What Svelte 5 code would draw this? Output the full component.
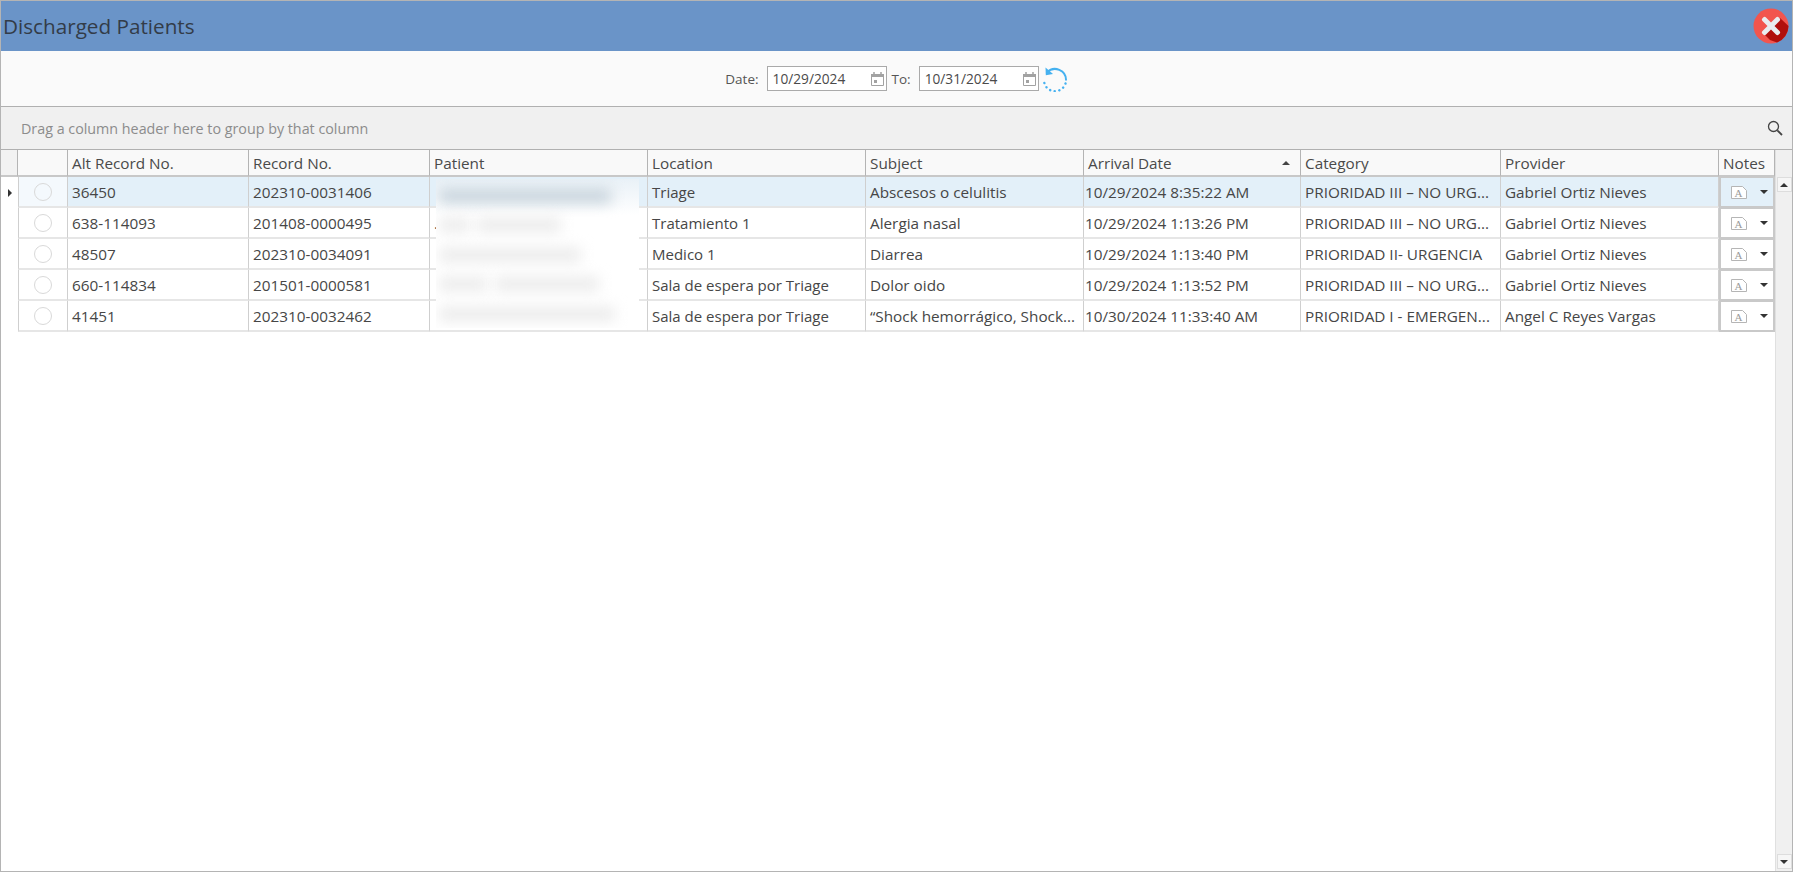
<script>
    const columns = [
        { label: "Alt Record No." },
        { label: "Record No." },
        { label: "Patient" },
        { label: "Location" },
        { label: "Subject" },
        { label: "Arrival Date", sorted: true },
        { label: "Category" },
        { label: "Provider" },
        { label: "Notes" },
    ];

    const rows = [
        {
            alt: "36450",
            record: "202310-0031406",
            location: "Triage",
            subject: "Abscesos o celulitis",
            arrival: "10/29/2024 8:35:22 AM",
            category: "PRIORIDAD III – NO URG...",
            provider: "Gabriel Ortiz Nieves",
        },
        {
            alt: "638-114093",
            record: "201408-0000495",
            patient: ".",
            location: "Tratamiento 1",
            subject: "Alergia nasal",
            arrival: "10/29/2024 1:13:26 PM",
            category: "PRIORIDAD III – NO URG...",
            provider: "Gabriel Ortiz Nieves",
        },
        {
            alt: "48507",
            record: "202310-0034091",
            location: "Medico 1",
            subject: "Diarrea",
            arrival: "10/29/2024 1:13:40 PM",
            category: "PRIORIDAD II- URGENCIA",
            provider: "Gabriel Ortiz Nieves",
        },
        {
            alt: "660-114834",
            record: "201501-0000581",
            location: "Sala de espera por Triage",
            subject: "Dolor oido",
            arrival: "10/29/2024 1:13:52 PM",
            category: "PRIORIDAD III – NO URG...",
            provider: "Gabriel Ortiz Nieves",
        },
        {
            alt: "41451",
            record: "202310-0032462",
            location: "Sala de espera por Triage",
            subject: "“Shock hemorrágico, Shock...",
            arrival: "10/30/2024 11:33:40 AM",
            category: "PRIORIDAD I - EMERGEN...",
            provider: "Angel C Reyes Vargas",
        },
    ];

    // blurred-out patient names, widths as they show in the patch
    const smudges = [
        [172],
        [30, 84],
        [142],
        [48, 104],
        [176],
    ];
</script>

{#snippet calendar()}
    <svg class="cal" width="13" height="14" viewBox="0 0 13 14">
        <path d="M.5 2.5h12v11H.5z" fill="none" stroke="#a2a2a2" />
        <path d="M0 2h13v3H0z" fill="#a2a2a2" />
        <path d="M3 0v3M10 0v3" stroke="#a2a2a2" stroke-width="1.5" />
        <path d="M3 8h3v3H3z" fill="#a2a2a2" />
    </svg>
{/snippet}

<div class="window">
    <header class="title-bar">
        <h1>Discharged Patients</h1>
        <svg class="close" width="36" height="36" viewBox="0 0 36 36">
            <circle cx="18" cy="18" r="17.5" fill="#f2554e" />
            <path d="M9.5 24.5 L17 32 L24 34.500 A17.5 17.5 0 0 0 35.5 18 L27 10z" fill="#b00f0c" />
            <path
                d="M13 9.500 18 14.500l5-5a2 2 0 0 1 2.800 0l.7.7a2 2 0 0 1 0 2.800L21.500 18l5 5a2 2 0 0 1 0 2.800l-.7.7a2 2 0 0 1-2.800 0l-5-5-5 5a2 2 0 0 1-2.800 0l-.7-.7a2 2 0 0 1 0-2.800l5-5-5-5a2 2 0 0 1 0-2.800l.7-.7a2 2 0 0 1 2.800 0z"
                fill="#e9edf0"
            />
        </svg>
    </header>

    <div class="toolbar">
        <span class="lbl">Date:</span>
        <div class="date">10/29/2024 {@render calendar()}</div>
        <span class="lbl">To:</span>
        <div class="date">10/31/2024 {@render calendar()}</div>
        <svg class="refresh" width="26" height="26" viewBox="0 0 26 26">
            <path d="M5 6.500A11 11 0 0 1 24 14.500" fill="none" stroke="#45b1f0" stroke-width="2" />
            <path d="M3.500 1.500 3.800 9.300 11 8z" fill="#45b1f0" />
            <path
                d="M23.500 17.500A11 11 0 0 1 2 14"
                fill="none"
                stroke="#45b1f0"
                stroke-width="2.400"
                stroke-linecap="round"
                stroke-dasharray="0.100 4.600"
            />
        </svg>
    </div>

    <div class="group-panel">
        <span>Drag a column header here to group by that column</span>
        <svg width="16" height="16" viewBox="0 0 16 16">
            <circle cx="6.500" cy="6.500" r="5" fill="none" stroke="#444" stroke-width="1.300" />
            <path d="M10.300 10.300 15 15" stroke="#444" stroke-width="1.800" />
        </svg>
    </div>

    <div class="grid-area">
        <div class="grid">
            <div class="head corner"></div>
            <div class="head"></div>
            {#each columns as col}
                <div class="head label">
                    <span>{col.label}</span>
                    {#if col.sorted}<i class="sort"></i>{/if}
                </div>
            {/each}

            {#each rows as row, i}
                <div class="indicator">{#if i === 0}<i class="current"></i>{/if}</div>
                <div class="cell radio-cell" class:fade={i === 0}><i class="radio"></i></div>
                <div class="cell" class:sel={i === 0}>{row.alt}</div>
                <div class="cell" class:sel={i === 0}>{row.record}</div>
                <div class="cell" class:sel={i === 0}>{row.patient ?? ""}</div>
                <div class="cell loc" class:sel={i === 0}>{row.location}</div>
                <div class="cell" class:sel={i === 0}>{row.subject}</div>
                <div class="cell tight" class:sel={i === 0}>{row.arrival}</div>
                <div class="cell" class:sel={i === 0}>{row.category}</div>
                <div class="cell" class:sel={i === 0}>{row.provider}</div>
                <div class="cell notes" class:sel={i === 0}>
                    <svg width="16" height="13" viewBox="0 0 16 13">
                        <path d="M.5.500h11l4 4v8H.5z" fill="#fff" stroke="#b5b5b5" />
                        <text x="3.500" y="10.500" class="doc-a">A</text>
                    </svg>
                    <i class="caret"></i>
                </div>
            {/each}

            <!-- redaction patch over the patient column -->
            <div class="patch">
                {#each smudges as parts, i}
                    <div class="smudge-row" class:first={i === 0}>
                        {#each parts as w}
                            <i class="smudge" style="width: {w}px"></i>
                        {/each}
                    </div>
                {/each}
            </div>
        </div>

        <div class="scrollbar">
            <button class="arrow" aria-label="Up"><i class="up"></i></button>
            <button class="arrow" aria-label="Down"><i class="caret"></i></button>
        </div>
    </div>
</div>

<style>
    :global(body) {
        margin: 0;
        background: #fff;
    }

    .window {
        box-sizing: border-box;
        width: 1793px;
        height: 872px;
        display: flex;
        flex-direction: column;
        border: 1px solid #b4b4b4;
        font-family: "Open Sans", "Noto Sans", sans-serif;
        color: #444;
        overflow: hidden;
    }

    .title-bar {
        height: 50px;
        flex: none;
        display: flex;
        align-items: center;
        justify-content: space-between;
        padding: 0 3px 0 2px;
        background: #6a94c8;
    }

    h1 {
        margin: 0;
        font-size: 20.700px;
        font-weight: 400;
        color: #333c48;
    }

    .toolbar {
        height: 55px;
        flex: none;
        box-sizing: border-box;
        display: flex;
        align-items: center;
        justify-content: center;
        background: #fafafa;
    }

    .lbl {
        font-size: 13.500px;
        color: #555;
    }

    .date {
        box-sizing: border-box;
        width: 120px;
        height: 25px;
        margin: 0 5px 0 8px;
        padding-left: 5px;
        display: flex;
        align-items: center;
        justify-content: space-between;
        background: #fff;
        border: 1px solid #aaa;
        font-size: 13.700px;
        color: #4a4a4a;
    }

    .cal {
        margin-right: 2px;
    }

    .refresh {
        margin-left: -2px;
    }

    .group-panel {
        height: 44px;
        flex: none;
        box-sizing: border-box;
        display: flex;
        align-items: center;
        justify-content: space-between;
        padding: 0 9px 0 20px;
        background: #f0f0f0;
        border-top: 1px solid #b0b0b0;
        border-bottom: 1px solid #b0b0b0;
        font-size: 14.300px;
        color: #8c8c8c;
    }

    .grid-area {
        flex: 1;
        display: flex;
        min-height: 0;
    }

    .grid {
        position: relative;
        flex: none;
        width: 1774px;
        display: grid;
        grid-template-columns: 17px 50px 181px 181px 218px 218px 218px 217px 200px 218px 56px;
        grid-auto-rows: 31px;
        grid-template-rows: 27px;
        align-content: start;
    }

    .head {
        box-sizing: border-box;
        background: #f9f9f9;
        border-right: 1px solid #b4b4b4;
        border-bottom: 2px solid #c8c8c8;
    }

    .corner {
        background: #f2f2f2;
    }

    .label {
        display: flex;
        align-items: center;
        justify-content: space-between;
        padding: 0 10px 0 4px;
        font-size: 15.300px;
        color: #4a4a4a;
        white-space: nowrap;
    }

    .sort {
        border: 4px solid transparent;
        border-top: 0;
        border-bottom: 4px solid #444;
    }

    .indicator {
        display: flex;
        align-items: center;
        justify-content: center;
        box-sizing: border-box;
        background: #fff;
    }

    .current {
        border: 4px solid transparent;
        border-right: 0;
        border-left: 4px solid #333;
    }

    .cell {
        box-sizing: border-box;
        display: flex;
        align-items: center;
        padding: 0 4px;
        font-size: 15.300px;
        color: #464646;
        white-space: nowrap;
        overflow: hidden;
        background: #fff;
        border-right: 1px solid #cfcfcf;
        border-bottom: 2px solid #e6e6e6;
    }

    .loc {
        font-size: 15px;
    }

    .tight {
        padding-left: 1px;
    }

    .sel {
        background: #e3f0f9;
    }

    .fade {
        background: #f4f9fd;
    }

    .radio-cell {
        justify-content: center;
        border-left: 1px solid #cfcfcf;
    }

    .radio {
        box-sizing: border-box;
        width: 18px;
        height: 18px;
        border-radius: 50%;
        border: 1px solid #d9d9d9;
    }

    .notes {
        justify-content: space-between;
        padding: 0 5px 0 10px;
        border: 2px solid #c9c9c9;
        border-top-width: 1px;
    }

    .doc-a {
        font-family: "Liberation Serif", serif;
        font-size: 11px;
        fill: #999;
    }

    .caret {
        border: 4.500px solid transparent;
        border-bottom: 0;
        border-top: 4.500px solid #333;
    }

    .up {
        border: 4px solid transparent;
        border-top: 0;
        border-bottom: 4px solid #333;
    }

    .patch {
        position: absolute;
        left: 435px;
        top: 29px;
        width: 203px;
        height: 149px;
        background: linear-gradient(#e9f1f7, #fff 24%);
        display: flex;
        flex-direction: column;
        padding-top: 2px;
        box-sizing: border-box;
        overflow: hidden;
    }

    .smudge-row {
        height: 29.500px;
        flex: none;
        display: flex;
        align-items: center;
        padding-left: 3px;
        gap: 8px;
    }

    .smudge {
        display: block;
        height: 14px;
        background: #ebebeb;
        filter: blur(7px);
    }

    .first .smudge {
        background: #c6d2db;
    }

    .scrollbar {
        flex: none;
        width: 17px;
        display: flex;
        flex-direction: column;
        justify-content: space-between;
        align-items: center;
        padding: 27px 0 2px;
        box-sizing: border-box;
        background: #f0f0f0;
        border-left: 1px solid #e0e0e0;
    }

    .arrow {
        width: 15px;
        height: 15px;
        padding: 0;
        display: flex;
        align-items: center;
        justify-content: center;
        background: #f6f6f6;
        border: 1px solid #ddd;
    }
</style>
